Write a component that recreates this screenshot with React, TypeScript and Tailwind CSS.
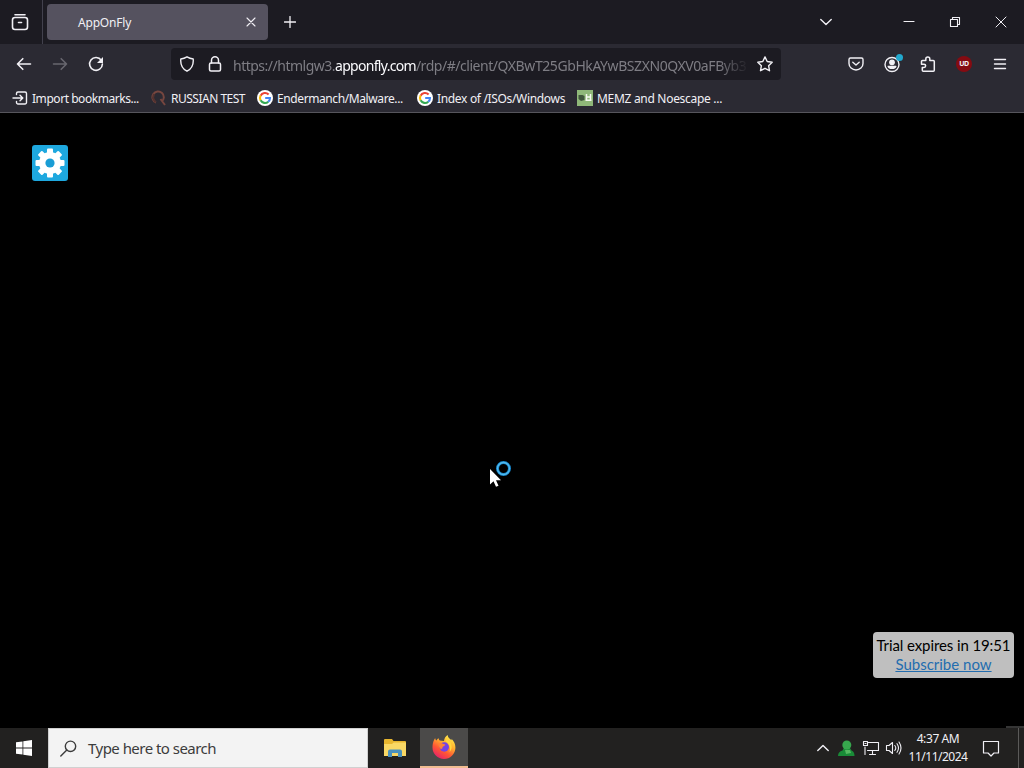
import React from "react";

interface IconProps {
  className?: string;
}

const stroke = {
  fill: "none",
  stroke: "currentColor",
  strokeWidth: 1.4,
  strokeLinecap: "round" as const,
  strokeLinejoin: "round" as const,
};

function GoogleIcon() {
  return (
    <svg className="size-4 shrink-0" viewBox="0 0 16 16">
      <circle cx="8" cy="8" r="8" fill="#fff" />
      <g fill="none" strokeWidth="2.1">
        <path d="M11.6 4.4A5 5 0 0 0 3.6 5.7" stroke="#ea4335" />
        <path d="M3.6 5.6a5 5 0 0 0 0 4.8" stroke="#fbbc05" />
        <path d="M3.6 10.3a5 5 0 0 0 7.7 1.4" stroke="#34a853" />
        <path d="M11.2 11.8A5 5 0 0 0 13 8H8.2" stroke="#4285f4" />
      </g>
    </svg>
  );
}

function ImportIcon() {
  return (
    <svg className="size-4 shrink-0" viewBox="0 0 16 16" {...stroke}>
      <path d="M4.500 4.500V3.500a1.500 1.500 0 0 1 1.500-1.500h7a1.500 1.500 0 0 1 1.500 1.500v9a1.500 1.500 0 0 1-1.500 1.500H6a1.500 1.500 0 0 1-1.500-1.500v-1M1 8h9.500M8 5.200 10.800 8 8 10.800" />
    </svg>
  );
}

function RussianIcon() {
  return (
    <svg className="size-4 shrink-0" viewBox="0 0 16 16" fill="none" stroke="#76463f" strokeWidth="2">
      <path d="M5 12.500A5.700 5.700 0 1 1 10.500 11.800M9.500 9l4.500 6" />
      <path d="M3 4 2 8l2.500 4.500" stroke="#54322f" />
    </svg>
  );
}

function MemzIcon() {
  return (
    <svg className="size-4 shrink-0" viewBox="0 0 16 16">
      <path fill="#8fb879" d="M0 0h16v16H0z" />
      <path fill="#40573c" d="M1.500 5h4l2 1v4L4 11 1.500 9z" />
      <path d="M9.500 4v6M13.500 4v6M9.500 7h4M8.500 10.200h6" stroke="#f5f9f0" strokeWidth="1.500" />
    </svg>
  );
}

function FirefoxIcon() {
  return (
    <svg className="size-6" viewBox="0 0 24 24">
      <defs>
        <linearGradient id="fox" x1=".8" y1="0" x2=".2" y2="1">
          <stop offset="0" stopColor="#fff44f" />
          <stop offset=".35" stopColor="#ffb02e" />
          <stop offset=".65" stopColor="#ff5634" />
          <stop offset="1" stopColor="#e31b72" />
        </linearGradient>
      </defs>
      <path
        fill="url(#fox)"
        d="M2.300 4.500c.200-.500.500-.900 1-1.300 0 1 .4 1.600 1.100 2.200C5 4.300 5.800 3.700 6.800 3.200c-.1 1 .2 1.800 1 2.400l4.200.5C12.300 3.500 13.400 1.300 15.600 0c.3 2.500 2 3.500 3.800 5.300.2-.5.200-1 .1-1.500 2.700 2.600 4.100 6 3.900 9.200A11.400 11.400 0 0 1 12 24 11.500 11.500 0 0 1 .5 12.300C.5 9.300 1 6.800 2.300 4.500z"
      />
      <circle cx="12.300" cy="12" r="4.700" fill="#7542e5" />
      <path fill="#ff8038" d="M6.300 8.400c1.800-.7 3.500-.5 5.200.7l1.800.3c-.3 1.500-2.200 1.600-2.700 2.500-.2.800 0 1.600-1.500 2-1.500-.6-2.600-3.300-2.800-5.500z" />
      <path fill="#ffd640" d="M14.400 4.300c3.400 1.300 5.400 4.300 5.300 8-.1 1.900-.9 3.500-2.100 4.600 1.300-4.400-.4-8.600-3.700-10.500z" />
    </svg>
  );
}

function ExplorerIcon() {
  return (
    <svg className="h-5 w-[22px]" viewBox="0 0 22 20">
      <path fill="#e8b62f" d="M0 2a1 1 0 0 1 1-1h7l1.500 2H21a1 1 0 0 1 1 1v14H0z" />
      <path fill="#f9d865" d="M0 6h8l1.700-1.500H22V18H0z" />
      <path fill="#4a91bd" d="M4 19v-5.500a2 2 0 0 1 2-2h10a2 2 0 0 1 2 2V19h-4v-4H8v4z" />
    </svg>
  );
}

function Bookmark({ icon, label, className }: { icon: React.ReactNode; label: string; className: string }) {
  return (
    <div className={`flex shrink-0 items-center gap-1 whitespace-nowrap ${className}`}>
      {icon}
      <span className="pt-[2px]">{label}</span>
    </div>
  );
}

function TitleBar() {
  return (
    <header className="flex h-11 items-center bg-[#1c1b22]">
      <div className="flex h-full w-[43px] items-center justify-center border-r border-[#42414d] pr-[3px]">
        <svg className="size-[18px]" viewBox="0 0 18 18" {...stroke} strokeWidth={1.6}>
          <path d="M4 1.800h10" />
          <rect x="1.500" y="4.500" width="15" height="12" rx="2.500" />
          <path d="M7.500 9.500h3" />
        </svg>
      </div>
      <div className="ml-1 flex h-9 w-[221px] items-center justify-between rounded bg-[#55525f] pr-3 pl-[31px]">
        <span className="pt-[2px] tracking-[-0.2px]">AppOnFly</span>
        <svg className="size-[10px]" viewBox="0 0 10 10" {...stroke} strokeWidth={1.1}>
          <path d="m1 1 8 8M9 1 1 9" />
        </svg>
      </div>
      <svg className="ml-4 size-3" viewBox="0 0 12 12" {...stroke} strokeWidth={1.3}>
        <path d="M6 .500v11M.500 6h11" />
      </svg>
      <div className="ml-auto flex h-full items-center">
        <svg className="mr-[71px] h-2 w-3" viewBox="0 0 12 8" {...stroke}>
          <path d="m.8 1.500 5.200 5 5.200-5" />
        </svg>
        <svg className="mr-[34px] h-3 w-3" viewBox="0 0 12 12" {...stroke} strokeWidth={1.2}>
          <path d="M1 5.500h10" />
        </svg>
        <svg className="mr-[34px] size-3" viewBox="0 0 12 12" {...stroke} strokeWidth={1.1}>
          <path d="M1.500 3.500h7v7h-7zM3.500 3.500v-2h7v7h-2" />
        </svg>
        <svg className="mr-[17px] size-3" viewBox="0 0 12 12" {...stroke} strokeWidth={1}>
          <path d="m1 1 10 10M11 1 1 11" />
        </svg>
      </div>
    </header>
  );
}

function NavBar() {
  return (
    <nav className="flex h-10 items-center">
      <svg className="ml-4 size-4" viewBox="0 0 16 16" {...stroke} strokeWidth={1.6}>
        <path d="M14.500 8h-13M6.800 2.700 1.500 8l5.300 5.300" />
      </svg>
      <svg className="ml-5 size-4 text-[#68676f]" viewBox="0 0 16 16" {...stroke} strokeWidth={1.6}>
        <path d="M1.500 8h13M9.200 2.700 14.500 8l-5.300 5.300" />
      </svg>
      <svg className="ml-5 size-4" viewBox="0 0 16 16" {...stroke} strokeWidth={1.6}>
        <path d="M13.300 4.300A6.400 6.400 0 1 0 14.400 8" />
        <path fill="currentColor" stroke="none" d="M15 1v5.500a.500.500 0 0 1-.5.500H9z" />
      </svg>
      <div className="ml-[67px] flex h-8 w-[610px] items-center rounded bg-[#1c1b22] pl-2">
        <svg className="size-4 shrink-0" viewBox="0 0 16 16" {...stroke}>
          <path d="M8 .800c2 1.200 4.200 1.900 6.200 2.200.5 5.500-1.300 9.700-6.200 12.200C3.100 12.700 1.300 8.500 1.800 3 3.800 2.700 6 2 8 .800z" />
        </svg>
        <svg className="ml-3 size-4 shrink-0" viewBox="0 0 16 16" {...stroke} strokeWidth={1.5}>
          <rect x="2.500" y="7" width="11" height="8" rx="1.500" />
          <path d="M4.500 7V4.300a3.500 3.500 0 0 1 7 0V7" />
        </svg>
        <div className="ml-[10px] w-[516px] pt-[2px] whitespace-nowrap text-[14px] text-[#7e7d84] [mask-image:linear-gradient(to_right,black_94%,transparent)]">
          <span className="tracking-[-0.5px]">https://htmlgw3.</span>
          <span className="tracking-[-0.7px] text-[#fbfbfe]">apponfly.com</span>
          <span className="tracking-[-0.46px]">/rdp/#/client/</span>
          <span className="tracking-[-0.42px]">QXBwT25GbHkAYwBSZXN0QXV0aFByb3</span>
        </div>
        <svg className="ml-2 size-4 shrink-0" viewBox="0 0 16 16" {...stroke}>
          <path d="m8 .900 2.200 4.600 5 .7-3.600 3.500.9 5L8 12.300l-4.500 2.400.9-5L.8 6.200l5-.7z" />
        </svg>
      </div>
      <div className="mr-4 ml-auto flex items-center gap-5">
        <svg className="size-4" viewBox="0 0 16 16" {...stroke}>
          <path d="M2.500 2h11a1.500 1.500 0 0 1 1.500 1.500V7.500a7 6.500 0 0 1-14 0v-4A1.500 1.500 0 0 1 2.500 2zM4.800 6.200 8 9l3.200-2.800" />
        </svg>
        <div className="relative size-4">
          <svg className="size-4 overflow-visible" viewBox="0 0 16 16" {...stroke}>
            <circle cx="8" cy="8.500" r="7" />
            <circle cx="8" cy="6.300" r="2.200" fill="currentColor" />
            <path fill="currentColor" d="M4.200 10.500h7.600c-1 2.500-6.600 2.500-7.600 0z" />
          </svg>
          <span className="absolute -top-[2px] left-3 size-[7px] rounded-full bg-[#22a9cf]" />
        </div>
        <svg className="size-4" viewBox="0 0 16 16" {...stroke} strokeWidth={1.5}>
          <path d="M5.800 4.500V3a2 2 0 0 1 4 0v1.500h3.500a1 1 0 0 1 1 1v8.700a1 1 0 0 1-1 1H3.300a1 1 0 0 1-1-1v-2.700h1.700a1.600 1.600 0 0 0 0-3.300H1.500v-2.700a1 1 0 0 1 1-1z" />
        </svg>
        <div className="flex size-4 items-center justify-center rounded-full bg-[#850b12] text-[7px] font-bold">
          <span className="tracking-[-0.5px]">UD</span>
        </div>
        <svg className="size-4" viewBox="0 0 16 16" {...stroke}>
          <path d="M2.500 3.500h11M2.500 8h11M2.500 12.500h11" />
        </svg>
      </div>
    </nav>
  );
}

function BookmarksBar() {
  return (
    <div className="flex h-[29px] items-center border-b border-[#56555c] pl-3">
      <Bookmark icon={<ImportIcon />} label="Import bookmarks..." className="w-[139px] tracking-[-0.45px]" />
      <Bookmark icon={<RussianIcon />} label="RUSSIAN TEST" className="w-[106px] tracking-[-0.5px]" />
      <Bookmark icon={<GoogleIcon />} label="Endermanch/Malware..." className="w-[160px] tracking-[-0.4px]" />
      <Bookmark icon={<GoogleIcon />} label="Index of /ISOs/Windows" className="w-[160px] tracking-[-0.33px]" />
      <Bookmark icon={<MemzIcon />} label="MEMZ and Noescape ..." className="tracking-[-0.3px]" />
    </div>
  );
}

function GearIcon({ className }: IconProps) {
  return (
    <svg className={className} viewBox="0 0 30 30">
      <g fill="#fff">
        <circle cx="15" cy="15" r="11" />
        {[0, 45, 90, 135].map((angle) => (
          <rect key={angle} x="12" y=".5" width="6" height="29" rx="1" transform={`rotate(${angle} 15 15)`} />
        ))}
      </g>
      <circle cx="15" cy="15" r="4.600" fill="#199dd5" />
    </svg>
  );
}

function RemoteScreen() {
  return (
    <main className="relative h-[615px] bg-black">
      <button className="absolute top-8 left-8 flex size-9 items-center justify-center rounded-[3px] bg-[#1ea8df]">
        <GearIcon className="size-[30px]" />
      </button>
      {/* Busy pointer */}
      <svg className="absolute top-[346px] left-[488px] h-[30px] w-6" viewBox="0 0 24 30">
        <path fill="#fff" d="M2 10v15.500l3.500-3.300 2.500 5.600 2.500-1-2.500-5.500h5z" />
        <circle cx="15.500" cy="9.500" r="6" fill="none" stroke="#1686cb" strokeWidth="3" />
        <circle cx="15.500" cy="9.500" r="6" fill="none" stroke="#51b9ee" strokeWidth="1.300" />
      </svg>
      <div className="absolute top-[519px] left-[873px] flex h-[46px] w-[141px] flex-col items-center justify-center rounded bg-[#bfbfbf] font-['Lato',sans-serif] text-[15px] leading-[19px] whitespace-nowrap text-black">
        <span className="tracking-[-0.1px]">Trial expires in 19:51</span>
        <a className="text-[#236daf] underline">Subscribe now</a>
      </div>
      {/* Edge of the show-desktop strip */}
      <span className="absolute right-0 bottom-0 h-[2px] w-[18px] bg-[#353535]" />
    </main>
  );
}

function Taskbar() {
  return (
    <footer className="flex h-10 items-center bg-[#222120]">
      <div className="flex w-12 justify-center">
        <svg className="size-4" viewBox="0 0 16 16" fill="#fff">
          <path d="M0 2.300 6.500 1.400v6.200H0zM7.300 1.300 16 0v7.600H7.300zM0 8.400h6.500v6.200L0 13.700zM7.300 8.400H16V16l-8.700-1.300z" />
        </svg>
      </div>
      <div className="flex h-10 w-80 items-center border border-[#d0d0d0] bg-[#f3f3f3] pl-[11px] text-[#3c3c3c]">
        <svg className="size-[17px]" viewBox="0 0 17 17" {...stroke}>
          <circle cx="10.500" cy="6.300" r="5.200" />
          <path d="M6.800 10 .8 16" />
        </svg>
        <span className="ml-[11px] text-[15px] tracking-[-0.53px]">Type here to search</span>
      </div>
      <div className="ml-[3px] flex h-10 w-[49px] items-center justify-center pr-[1px]">
        <ExplorerIcon />
      </div>
      <div className="flex h-10 w-12 items-center justify-center border-b-2 border-[#f2bd91] bg-[#4b4a49]">
        <FirefoxIcon />
      </div>
      <div className="ml-auto flex h-10 items-center">
        <svg className="h-2 w-3" viewBox="0 0 12 8" {...stroke}>
          <path d="m.8 6.500 5.200-5 5.200 5" />
        </svg>
        <svg className="ml-2 h-[17px] w-[18px]" viewBox="0 0 18 17">
          <path fill="#198b37" d="M1 16c0-3 1.500-4.500 4.500-5.500L7 8h6l1.500 2.500c2 1 3 2.500 3 5.500z" />
          <circle cx="9.800" cy="5" r="4.500" fill="#37a64d" />
          <path fill="#55b961" d="M8 10h5l1 3-5 1z" />
        </svg>
        <svg className="ml-[7px] h-4 w-[18px]" viewBox="0 0 18 16" {...stroke} strokeWidth={1.1}>
          <path d="M6 2.500h10.500v8H5.500M3 7v7.500M10.500 10.500v4M7.500 14.500h6M1.500 1.500h4v4h-4zM3 3.500h1" />
        </svg>
        <svg className="ml-[5px] h-4 w-[17px]" viewBox="0 0 17 16" {...stroke} strokeWidth={1.1}>
          <path d="M1.500 5.500H4l3.500-3v11L4 10.500H1.500zM9.800 5.500q2 2.500 0 5M12 3.700q3 4.300 0 8.600M14 2q4 6 0 12" />
        </svg>
        <div className="ml-[5px] flex w-[62px] flex-col items-center text-[12px] leading-[18px] whitespace-nowrap">
          <span className="tracking-[-0.4px]">4:37 AM</span>
          <span className="tracking-[-0.5px]">11/11/2024</span>
        </div>
        <svg className="ml-[13px] h-[17px] w-[18px]" viewBox="0 0 18 17" {...stroke} strokeWidth={1.2}>
          <path d="M1.500 1.500h15v11.500h-4.500L9 16l-3-3H1.500z" />
        </svg>
        <div className="ml-[18px] h-10 w-[6px] border-l border-[#5b5a59]" />
      </div>
    </footer>
  );
}

export default function App() {
  return (
    <div className="h-[768px] w-[1024px] overflow-hidden bg-[#2b2a33] font-['Noto_Sans','Open_Sans',sans-serif] text-[12px] text-[#f1f0f5]">
      <TitleBar />
      <NavBar />
      <BookmarksBar />
      <RemoteScreen />
      <Taskbar />
    </div>
  );
}
